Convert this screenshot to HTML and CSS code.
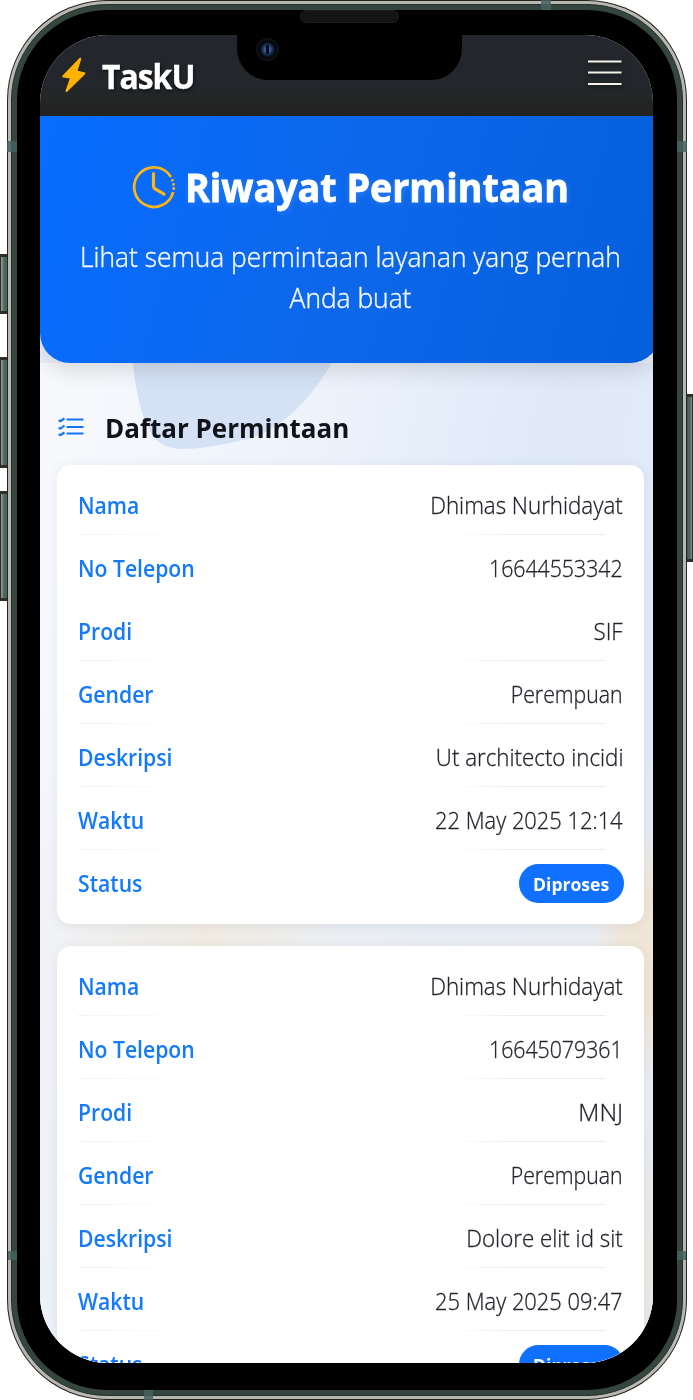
FILE: index.html
```
<!DOCTYPE html>
<html lang="id">
<head>
<meta charset="utf-8">
<title>TaskU - Riwayat Permintaan</title>
<link rel="stylesheet" href="styles.css">
</head>
<body>
<div class="stage">
  <i class="key key-mute"></i><i class="key key-up"></i><i class="key key-down"></i><i class="key key-power"></i>
  <div class="phone">
    <div class="steel"><div class="green"><div class="bezel">
      <main class="screen">
        <header class="navbar">
          <svg class="bolt" viewBox="0 0 26 36"><path d="M18.300 1.200 1.600 18.500c-.8.9-.4 1.800.7 1.900l6.500 1.100-4.200 12c-.4 1.300.8 1.900 1.800.9L24 17.200c.8-.9.4-1.900-.7-2L16.600 13.800 20.200 2.200c.4-1.300-.9-1.900-1.900-1Z"/></svg>
          <span class="brand">TaskU</span>
          <svg class="menu" viewBox="0 0 34 26"><path d="M0 1.500h33.500M0 12.500h33.500M0 24h33.500"/></svg>
        </header>
        <section class="hero">
          <h1><svg class="clock" viewBox="0 0 44 44"><path d="M39 12A19.800 19.800 0 1 0 41.200 27M40 14.200l.7 2M41.400 18.300l.3 2.200M41.800 22.300l-.1 2.400"/><path class="hands" d="M21.500 8.500v12.500q0 2 2 3.200l8.500 5"/></svg><span>Riwayat Permintaan</span></h1>
          <p>Lihat semua permintaan layanan yang pernah<br>Anda buat</p>
        </section>
        <section class="content">
          <svg class="blob" viewBox="0 0 200 90"><path d="M0 0C2 22 6 44 13 60 20 77 30 86 50 86 72 86 98 80 118 75 147 66 177 38 199 0Z"/></svg>
          <h2><svg class="list" viewBox="0 0 26 20"><path d="M8.500 2.500h17M8.500 10h17M8.500 16.500h17M.5 3.500l2 .5L6.500 1.500M.5 11l2 .5L6.500 8.500M.5 17.500l2 .5L6.500 15.500"/></svg><span>Daftar Permintaan</span></h2>
          <dl class="card">
            <div class="row"><dt>Nama</dt><dd>Dhimas Nurhidayat</dd></div>
            <div class="row faint"><dt>No Telepon</dt><dd class="narrow">16644553342</dd></div>
            <div class="row"><dt>Prodi</dt><dd>SIF</dd></div>
            <div class="row"><dt>Gender</dt><dd class="narrow">Perempuan</dd></div>
            <div class="row"><dt>Deskripsi</dt><dd>Ut architecto incidi</dd></div>
            <div class="row"><dt>Waktu</dt><dd class="date">22 May 2025 12:14</dd></div>
            <div class="row"><dt>Status</dt><dd class="badge"><span>Diproses</span></dd></div>
          </dl>
          <dl class="card">
            <div class="row"><dt>Nama</dt><dd>Dhimas Nurhidayat</dd></div>
            <div class="row"><dt>No Telepon</dt><dd class="narrow">16645079361</dd></div>
            <div class="row"><dt>Prodi</dt><dd class="wide">MNJ</dd></div>
            <div class="row"><dt>Gender</dt><dd class="narrow">Perempuan</dd></div>
            <div class="row"><dt>Deskripsi</dt><dd>Dolore elit id sit</dd></div>
            <div class="row"><dt>Waktu</dt><dd class="date">25 May 2025 09:47</dd></div>
            <div class="row"><dt>Status</dt><dd class="badge"><span>Diproses</span></dd></div>
          </dl>
        </section>
      </main>
    </div></div></div>
    <div class="notch"><i class="lens"></i></div>
    <i class="speaker"></i>
    <i class="band b1"></i><i class="band b2"></i><i class="band b3"></i><i class="band b4"></i><i class="band b5"></i><i class="band b6"></i>
  </div>
</div>
</body>
</html>
```
FILE: styles.css
```
* { box-sizing: border-box; }
body { margin: 0; background: #fff; font-family: "Open Sans", "Noto Sans", sans-serif; }
h1, h2, p, dl, dd, dt { margin: 0; }
.stage { position: relative; width: 693px; height: 1400px; overflow: hidden; padding-left: 7px; }

/* device shell */
.phone { position: relative; width: 680px; height: 1400px; padding: 1px; border-radius: 100px; background: #24231f; }
.steel { height: 100%; padding: 3px; border-radius: 99px; background: #b9b7b2; }
.green { height: 100%; padding: 5px; border-radius: 96px; background: #354640; border: 1px solid #25302b; }
.bezel { height: 100%; padding: 25px 23px 27px; border-radius: 90px; background: #000; }
.notch { position: absolute; left: 230px; top: 30px; width: 225px; height: 50px; background: #000; border-radius: 0 0 31px 31px; }
.lens { position: absolute; left: 19px; top: 8px; width: 23px; height: 23px; border-radius: 50%; border: 2px solid #111113; background: radial-gradient(ellipse 2px 5px at 50% 50%, #03070e 90%, transparent), radial-gradient(circle, #315c94 0 3px, #183052 5px, #03060b 8px); }
.speaker { position: absolute; left: 293px; top: 10px; width: 99px; height: 13px; border-radius: 6px; background: #141414; border: 1px solid #1c1c1c; }
.band { position: absolute; background: #456460; opacity: .85; }
.b1 { left: 534px; top: 0; width: 10px; height: 10px; }
.b2 { left: 0; top: 141px; width: 10px; height: 11px; }
.b3 { right: 0; top: 141px; width: 10px; height: 11px; }
.b4 { left: 1px; top: 1251px; width: 9px; height: 9px; }
.b5 { right: 1px; top: 1251px; width: 9px; height: 9px; }
.b6 { left: 137px; bottom: 0; width: 9px; height: 10px; }
.key { position: absolute; left: 0; width: 8px; background: linear-gradient(90deg, #90908a 0 1px, #486560 3px 6px, #25312c); border: solid #302e28; border-width: 3px 1px; }
.key-mute { top: 254px; height: 60px; }
.key-up { top: 357px; height: 111px; }
.key-down { top: 491px; height: 110px; }
.key-power { left: auto; right: 0; top: 394px; height: 168px; background: linear-gradient(90deg, #25312c, #486560 2px 4px, #92918b); }

/* screen */
.screen { display: flex; flex-direction: column; width: 613px; height: 1328px; overflow: hidden; border-radius: 68px; background: #edf1fa; }
.navbar { flex: none; height: 81px; display: flex; align-items: center; padding: 0 31px 0 21px; background: linear-gradient(#23262c, #23272b 60%, #242422); }
.bolt { width: 26px; height: 36px; fill: #ffb300; margin-top: -2px; }
.brand { margin-left: 15px; color: #fff; font-size: 34px; font-weight: 700; letter-spacing: -1px; transform: scaleX(.935); transform-origin: left; -webkit-text-stroke: .4px #fff; text-shadow: 1px 2px 4px #0009; }
.menu { margin-left: auto; width: 34px; height: 26px; margin-top: -5px; fill: none; stroke: #f5f2e8; stroke-width: 2; filter: drop-shadow(1px 2px 2px #0008); }
.hero { flex: none; position: relative; z-index: 1; width: 620px; height: 247px; padding: 38px 0 0; border-radius: 0 0 30px 30px; color: #fff; background: linear-gradient(105deg, #066dff, #0d67ea 50%, #045fdc); box-shadow: 0 7px 22px #0002; }
h1 { display: flex; align-items: center; gap: 9px; height: 68px; padding-left: 92px; font-size: 40px; font-weight: 700; white-space: nowrap; }
h1 span { -webkit-text-stroke: .8px #fff; transform: scaleX(.94); transform-origin: left; margin-top: -3px; text-shadow: 1px 2px 8px #63a3ff66; }
.clock { width: 44px; height: 44px; margin-top: -2px; fill: none; stroke: #ffb514; stroke-width: 2.700; }
.clock .hands { stroke-width: 3.200; stroke-linecap: round; }
.hero p { width: 621px; margin-top: 14px; text-align: center; font-size: 27.500px; line-height: 41px; font-weight: 300; -webkit-text-stroke: .4px #f5f8ff; white-space: nowrap; color: #f5f8ff; transform: scaleX(.958); }
.content { position: relative; flex: none; padding: 0 9px 0 17px; background: radial-gradient(ellipse 75px 130px at 625px 590px, #f0e6d8 50%, transparent), radial-gradient(ellipse 60px 150px at 625px 900px, #ebe8df, transparent), radial-gradient(ellipse 150px 110px at 165px 570px, #f0ebe2, transparent), linear-gradient(#f0f0f000 35%, #efeff1aa 56%, #e9edf888), linear-gradient(100deg, #f8f9fc 0, #edf3fc 35%, #dfe9f8 65%, #e6ecf8); }
.blob { position: absolute; left: 93px; top: 0; width: 200px; height: 90px; fill: #d5e2f5; }
h2 { position: relative; display: flex; align-items: center; height: 102px; padding-top: 26px; font-size: 27.500px; font-weight: 700; color: #101319; white-space: nowrap; }
h2 span { transform: scaleX(.945); transform-origin: left; }
.list { width: 26px; height: 20px; margin: 0 21px 0 1px; fill: none; stroke: #1673f5; stroke-width: 2.100; }
.card { position: relative; height: 459px; margin-bottom: 22px; padding: 7px 21px 11px; border-radius: 14px; background: #fff; box-shadow: 0 2px 12px #5060701c; }
.row { display: flex; justify-content: space-between; align-items: center; height: 63px; padding-top: 2px; font-size: 23.500px; white-space: nowrap; background: linear-gradient(90deg, #f3f3f3, #fff) 0 100% / 122px 1px no-repeat, linear-gradient(90deg, #fff, #eaeaed 50%) 372px 100% / 155px 1px no-repeat; }
.row.faint { background: none; }
.row:last-child { background: none; padding-top: 3px; }
dt { color: #1479fa; font-weight: 600; transform: scaleX(.9); transform-origin: left; }
dd { color: #23242c; font-weight: 300; -webkit-text-stroke: .3px #23242c; transform: scaleX(.95); transform-origin: right; }
.narrow { transform: scaleX(.905); }
.date { transform: scaleX(.93); }
.wide { transform: scaleX(1.040); }
.badge { width: 105px; height: 39px; border-radius: 20px; margin-right: -1px; background: #1070ff; color: #fff; font-size: 18.500px; font-weight: 700; line-height: 40px; text-align: center; transform: none; -webkit-text-stroke: 0; }
.badge span { display: inline-block; transform: scaleX(.95); }
```
